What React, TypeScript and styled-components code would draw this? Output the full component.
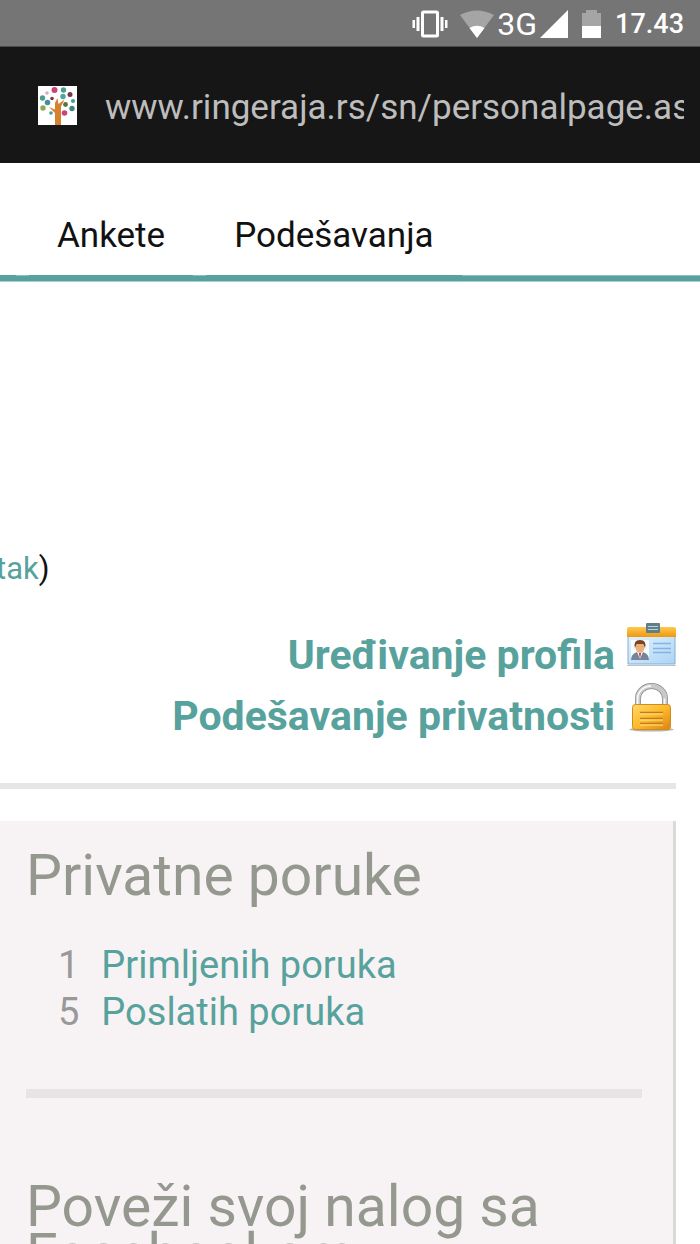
import React from "react";
import styled, { createGlobalStyle } from "styled-components";

const TEAL = "#58a29d";
const RULE = "#e6e6e6";
const MUTED = "#95988f";

const GlobalStyle = createGlobalStyle`
  * { box-sizing: border-box; }
  body { margin: 0; background: #fff; font-family: Roboto, "Noto Sans", sans-serif; }
  a { text-decoration: none; }
  svg { display: block; flex: none; }
`;

const Screen = styled.div`
  height: 100vh;
  overflow: hidden;
`;

const StatusBar = styled.header`
  display: flex;
  align-items: center;
  justify-content: flex-end;
  gap: 14px;
  height: 47px;
  padding: 2px 16px 0 0;
  background: #757575;
  border-bottom: 1px solid #4a4a4a;
  color: #fff;
`;

const StatusIcons = styled.div`
  display: flex;
  align-items: center;
  gap: 12px;
`;

const Signal = styled.div`
  display: flex;
  align-items: center;
  gap: 3px;
`;

const Network = styled.span`
  font-size: 32px;
  line-height: 46px;
`;

const Clock = styled.time`
  font-size: 27px;
  font-weight: 500;
  line-height: 46px;
`;

const AddressBar = styled.div`
  display: flex;
  align-items: center;
  gap: 28px;
  height: 116px;
  padding: 0 16px 0 38px;
  background: #161616;
`;

const Address = styled.input`
  flex: 1;
  min-width: 0;
  height: 52px;
  padding: 4px 0 0;
  border: 0;
  outline: 0;
  background: none;
  color: #bdbdbd;
  font: 35px/48px Roboto, sans-serif;
`;

const Nav = styled.nav`
  display: flex;
  gap: 13px;
  height: 119px;
  padding-top: 36px;
  background: linear-gradient(#8dc0bd 0 1px, ${TEAL} 1px 6px, #a9d0ce 6px 7px) bottom / 100% 7px no-repeat;
`;

const TabEdge = styled.span`
  width: 16px;
  height: 82px;
  border-bottom: 6px solid ${TEAL};
`;

const Tab = styled.a`
  height: 82px;
  padding: 0 28px;
  border-bottom: 6px solid ${TEAL};
  color: #111;
  font-size: 35px;
  line-height: 74px;
`;

const Profile = styled.section`
  margin-right: 24px;
  padding: 266px 0 39px;
  border-bottom: 6px solid ${RULE};
`;

const Note = styled.p`
  margin: 0 0 32px -4px;
  color: #111;
  font-size: 31px;
  line-height: 42px;
`;

const TextLink = styled.a`
  color: ${TEAL};
`;

const Actions = styled.div`
  display: flex;
  flex-direction: column;
  align-items: flex-end;
`;

const Action = styled.a`
  display: flex;
  gap: 12px;
  height: 61px;
  color: ${TEAL};
  font-size: 41px;
  font-weight: 700;
  line-height: 66px;
`;

const Panel = styled.aside`
  margin: 32px 24px 0 0;
  padding: 31px 31px 0 26px;
  background: #f7f3f4;
  border-right: 3px solid #d8dad5;
`;

const Heading = styled.h2`
  margin: 0;
  color: ${MUTED};
  font-size: 57px;
  font-weight: 400;
  line-height: 48px;
`;

const Counts = styled.ul`
  margin: 42px 0 53px;
  padding: 0 0 0 32px;
  list-style: none;
`;

const Count = styled.li`
  display: flex;
  gap: 22px;
  color: #999;
  font-size: 38px;
  line-height: 47px;
`;

const Divider = styled.hr`
  height: 9px;
  margin: 0 0 85px;
  border: 0;
  background: #e8e4e5;
`;

const VibrateIcon = () => (
  <svg width="36" height="28" viewBox="0 0 36 28" fill="#fff" aria-hidden="true">
    <path fillRule="evenodd" d="M11.500 .5h13a2.500 2.500 0 0 1 2.500 2.500v22a2.500 2.500 0 0 1-2.500 2.500h-13A2.500 2.500 0 0 1 9 25V3A2.500 2.500 0 0 1 11.500 .5zm.5 3v21h12v-21z" />
    <path d="M4.500 7h3v14h-3zM.5 10h2.500v8H.5zM28.500 7h3v14h-3zM33 10h2.500v8H33z" />
  </svg>
);

const WifiIcon = () => (
  <svg width="34" height="28" viewBox="0 0 34 28" aria-hidden="true">
    <path d="M0 5Q17-4 34 5L17 28z" fill="#a5a5a5" />
    <path d="M9.500 18q7.500-4.500 15 0L17 28z" fill="#fff" />
  </svg>
);

const CellIcon = () => (
  <svg width="28" height="28" viewBox="0 0 28 28" aria-hidden="true">
    <path d="M28 0v28H0z" fill="#fff" />
  </svg>
);

const BatteryIcon = () => (
  <svg width="19" height="28" viewBox="0 0 19 28" aria-hidden="true">
    <path d="M0 16V3h4V0h11v3h4v13z" fill="#a5a5a5" />
    <path d="M0 16h19v12H0z" fill="#fff" />
  </svg>
);

const LEAVES: [number, number, number, string][] = [
  [16.5, 4, 3, "#c6457a"], [25.5, 4, 2.7, "#4c9c93"], [9, 7, 1.8, "#e3a9c3"],
  [32, 8.5, 2.5, "#70384b"], [4.5, 12, 2.7, "#4c9c93"], [25, 10.5, 2.7, "#4fa49e"],
  [14, 12.5, 1.8, "#7d3440"], [9.5, 16.5, 2.8, "#468f92"], [35, 15, 2.1, "#4c9c93"],
  [27.5, 18.5, 2.4, "#56763a"], [5, 22, 2.7, "#93a752"], [34, 22.5, 2.7, "#40867e"],
  [13, 27, 1.8, "#4c9c93"], [26.5, 27, 2.8, "#c6457a"],
];

const Favicon = () => (
  <svg width="39" height="39" viewBox="0 0 39 39" aria-hidden="true">
    <path d="M0 0h39v39H0z" fill="#fff" />
    <path d="M17 39V27l-6-6 6 2.500V17l2.500-5 1 6 6-4.500-3.500 7V39z" fill="#d4822f" />
    {LEAVES.map(([x, y, r, fill]) => (
      <circle key={`${x}-${y}`} cx={x} cy={y} r={r} fill={fill} />
    ))}
  </svg>
);

const CardIcon = () => (
  <svg width="49" height="61" viewBox="0 0 49 61" aria-hidden="true">
    <defs>
      <linearGradient id="cardTop" x2="0" y2="1"><stop stopColor="#ffc94d" /><stop offset="1" stopColor="#ee9810" /></linearGradient>
      <linearGradient id="cardBody" x2="1" y2="1"><stop stopColor="#e3f2fd" /><stop offset="1" stopColor="#a9d4f6" /></linearGradient>
    </defs>
    <path d="M1 14h47v28H1z" fill="url(#cardBody)" stroke="#84aed3" />
    <path d="M0 15V7q0-2 2-2h45q2 0 2 2v8z" fill="url(#cardTop)" />
    <path d="M0 43.500h49" stroke="#b9c3cc" />
    <rect x="19" y="1" width="14" height="10" rx="1" fill="#607f8d" />
    <path d="M21 4.500h10M21 7.500h10" stroke="#bed2d8" />
    <path d="M4 18h18v20H4z" fill="#f6fbff" />
    <path d="M4 38q0-6 6-8h6q6 2 6 8z" fill="#76849c" />
    <path d="m10 30 3 7 3-7z" fill="#fff" />
    <path d="m12 31 1 6 1-6z" fill="#a33" />
    <ellipse cx="13" cy="25" rx="4.500" ry="6" fill="#e9af7d" />
    <path d="M8 26q-2-8 5-8t5 8l-1.500-4h-7z" fill="#7b431f" />
    <path d="M26 21.500h18M26 26.500h18M26 30.500h18" stroke="#83b4e2" strokeWidth="1.500" />
  </svg>
);

const LockIcon = () => (
  <svg width="49" height="61" viewBox="0 0 49 61" aria-hidden="true">
    <defs>
      <linearGradient id="lockBody" x2="1" y2="1"><stop stopColor="#ffd968" /><stop offset=".5" stopColor="#fdb92c" /><stop offset="1" stopColor="#dc8411" /></linearGradient>
    </defs>
    <ellipse cx="24.500" cy="46.500" rx="22" ry="2" fill="#b9b2a6" />
    <path d="M11 22v-6.500a13.500 12.500 0 0 1 27 0V22" fill="none" stroke="#8d8d8d" strokeWidth="6" />
    <path d="M11 22v-6.500a13.500 12.500 0 0 1 27 0V22" fill="none" stroke="#c9c9c9" strokeWidth="4.500" />
    <path d="M10.500 22v-6.500A13.500 13 0 0 1 24 3M37.500 22v-6.500" fill="none" stroke="#f7f7f7" strokeWidth="1.800" />
    <rect x="5.500" y="21.500" width="38" height="25" rx="3" fill="url(#lockBody)" stroke="#d28a1b" />
    <path d="M13 29.500h23M13 35.500h23M13 40.500h23" stroke="#c77b10" strokeWidth="1.500" />
    <path d="M13 31h23M13 37h23M13 42h23" stroke="#ffe58b" />
  </svg>
);

export default function App() {
  return (
    <Screen>
      <GlobalStyle />
      <StatusBar>
        <StatusIcons>
          <VibrateIcon />
          <Signal>
            <WifiIcon />
            <Network>3G</Network>
            <CellIcon />
          </Signal>
        </StatusIcons>
        <BatteryIcon />
        <Clock>17.43</Clock>
      </StatusBar>
      <AddressBar>
        <Favicon />
        <Address aria-label="Adresa" type="text" defaultValue="www.ringeraja.rs/sn/personalpage.aspx" />
      </AddressBar>
      <Nav>
        <TabEdge />
        <Tab href="#ankete">Ankete</Tab>
        <Tab href="#podesavanja">Podešavanja</Tab>
      </Nav>
      <main>
        <Profile>
          <Note>
            <TextLink href="#tak">tak</TextLink>)
          </Note>
          <Actions>
            <Action href="#profil">
              Uređivanje profila
              <CardIcon />
            </Action>
            <Action href="#privatnost">
              Podešavanje privatnosti
              <LockIcon />
            </Action>
          </Actions>
        </Profile>
        <Panel>
          <Heading>Privatne poruke</Heading>
          <Counts>
            <Count>
              1 <TextLink href="#primljene">Primljenih poruka</TextLink>
            </Count>
            <Count>
              5 <TextLink href="#poslate">Poslatih poruka</TextLink>
            </Count>
          </Counts>
          <Divider />
          <Heading>Poveži svoj nalog sa Facebookom</Heading>
        </Panel>
      </main>
    </Screen>
  );
}
